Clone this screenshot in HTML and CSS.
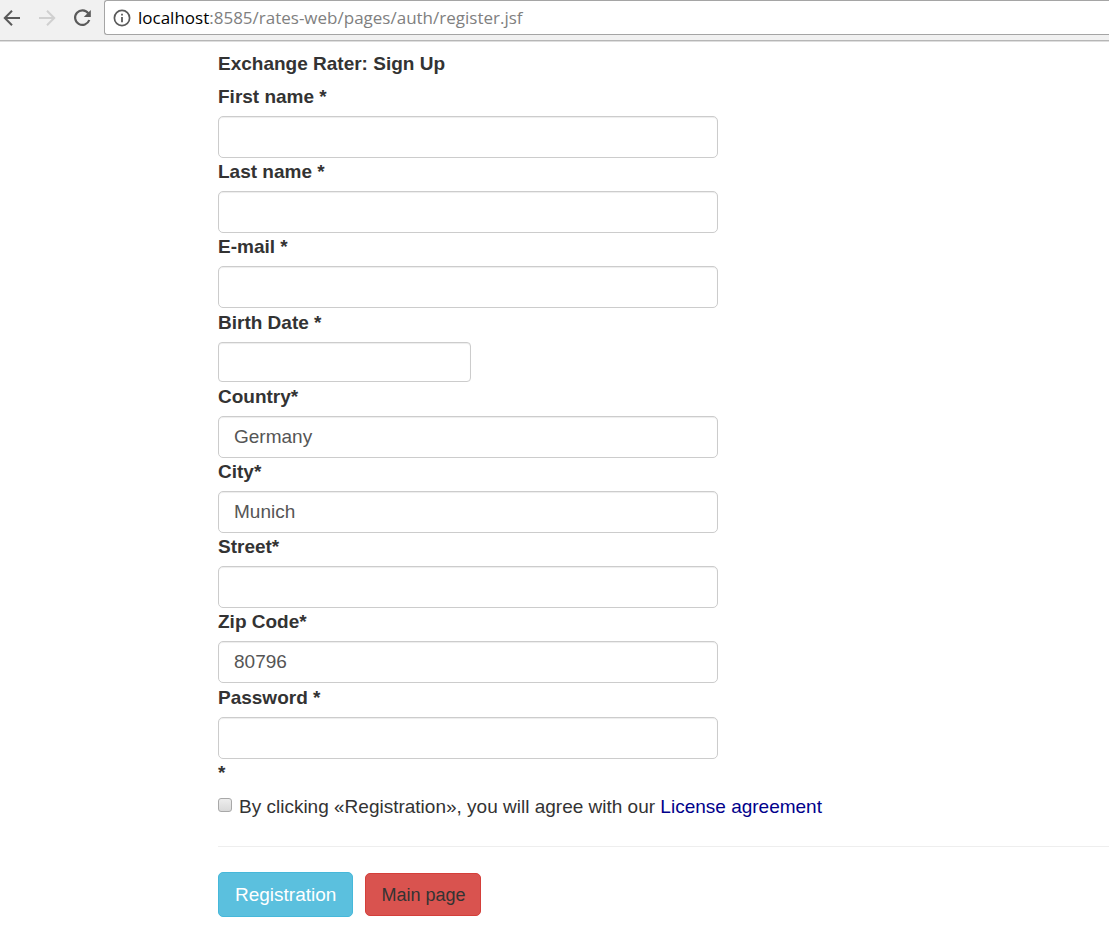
FILE: index.html
```
<!DOCTYPE html>
<html lang="en">
<head>
<meta charset="utf-8">
<title>Exchange Rater: Sign Up</title>
<link rel="stylesheet" href="styles.css">
</head>
<body>
<header class="toolbar">
  <nav class="nav">
    <button class="nav-btn" type="button" aria-label="Back">
      <svg width="20" height="20" viewBox="0 0 20 20" fill="none" stroke="#5a5a5a" stroke-width="2"><path d="M18 10H3M10 2.8 2.8 10l7.2 7.2"/></svg>
    </button>
    <button class="nav-btn" type="button" aria-label="Forward" disabled>
      <svg width="20" height="20" viewBox="0 0 20 20" fill="none" stroke="#d0d0d0" stroke-width="2"><path d="M2 10h15M10 2.8l7.2 7.2-7.2 7.2"/></svg>
    </button>
    <button class="nav-btn" type="button" aria-label="Reload">
      <svg width="20" height="20" viewBox="0 0 20 20"><path d="M16.3 5.3A7.3 7.3 0 1 0 17.3 12" fill="none" stroke="#5a5a5a" stroke-width="2.2"/><path d="M18.8 2v7h-7z" fill="#5a5a5a"/></svg>
    </button>
  </nav>
  <div class="address">
    <svg width="18" height="18" viewBox="0 0 18 18"><circle cx="9" cy="9" r="7.6" fill="none" stroke="#5a5a5a" stroke-width="1.7"/><path d="M8.1 4.8h1.8v1.8H8.1zM8.1 8h1.8v5.2H8.1z" fill="#5a5a5a"/></svg>
    <span class="url"><span class="url-host">localhost</span>:8585/rates-web/pages/auth/register.jsf</span>
  </div>
</header>
<main class="page">
  <h1 class="title">Exchange Rater: Sign Up</h1>
  <form class="form">
    <div class="group">
      <label class="label" for="first">First name *</label>
      <input class="input" id="first" type="text">
      <label class="label" for="last">Last name *</label>
      <input class="input" id="last" type="text">
      <label class="label" for="email">E-mail *</label>
      <input class="input" id="email" type="email">
    </div>
    <div class="group">
      <label class="label" for="birth">Birth Date *</label>
      <input class="input input-date" id="birth" type="text">
    </div>
    <div class="group">
      <label class="label" for="country">Country*</label>
      <input class="input" id="country" type="text" value="Germany">
      <label class="label" for="city">City*</label>
      <input class="input" id="city" type="text" value="Munich">
      <label class="label" for="street">Street*</label>
      <input class="input" id="street" type="text">
      <label class="label" for="zip">Zip Code*</label>
      <input class="input" id="zip" type="text" value="80796">
    </div>
    <div class="group">
      <label class="label" for="password">Password *</label>
      <input class="input" id="password" type="password">
      <span class="required">*</span>
    </div>
    <div class="agree">
      <input class="check" id="agree" type="checkbox">
      <label for="agree">By clicking «Registration», you will agree with our <a class="link" href="#">License agreement</a></label>
    </div>
    <hr class="rule">
    <div class="actions">
      <button class="btn btn-info" type="submit">Registration</button>
      <button class="btn btn-danger" type="button">Main page</button>
    </div>
  </form>
</main>
</body>
</html>
```
FILE: styles.css
```
* { box-sizing: border-box; }
body {
  margin: 0;
  background: #fff;
  color: #333;
  font: 19px/26px "Liberation Sans", Arial, sans-serif;
}
.toolbar {
  display: flex;
  align-items: flex-start;
  gap: 12px;
  padding-bottom: 5px;
  background: #f1f1f1;
  border-bottom: 1px solid #b6b6b6;
  box-shadow: 0 1px 0 #dedede;
}
.nav {
  display: flex;
  gap: 15px;
  padding-top: 8px;
  padding-left: 2px;
}
.nav-btn {
  display: flex;
  padding: 0;
  border: 0;
  background: none;
}
.address {
  flex: 1;
  display: flex;
  align-items: center;
  gap: 7px;
  height: 35px;
  padding-left: 8px;
  background: #fff;
  border: 1px solid #a5a5a5;
  border-right: 0;
  border-radius: 3px 0 0 3px;
}
.url {
  color: #808080;
  font: 17px/24px "Open Sans", "Noto Sans", sans-serif;
  white-space: nowrap;
}
.url-host { color: #000; }
.page { padding: 9px 0 32px 218px; }
.title {
  margin: 0;
  font-size: 19px;
  line-height: 27px;
}
.form {
  display: flex;
  flex-direction: column;
  gap: 1px;
  padding-top: 6px;
}
.group {
  display: flex;
  flex-direction: column;
  align-items: flex-start;
}
.label {
  height: 33px;
  line-height: 27px;
  font-weight: bold;
}
.input {
  width: 500px;
  max-width: 100%;
  height: 42px;
  padding: 0 15px;
  border: 1px solid #ccc;
  border-radius: 5px;
  background: #fff;
  box-shadow: inset 0 1px 1px rgba(0, 0, 0, .075);
  color: #555;
  font: inherit;
}
.input-date {
  width: 253px;
  height: 40px;
  border-radius: 4px;
}
.required {
  line-height: 27px;
  font-weight: bold;
}
.agree {
  display: flex;
  align-items: center;
  gap: 7px;
  padding-top: 7px;
}
.check {
  appearance: none;
  width: 14px;
  height: 14px;
  margin: 0 0 4px;
  border: 1px solid #a8a8a8;
  border-radius: 3px;
  background: linear-gradient(#ededed, #d9d9d9);
}
.link {
  color: #00008b;
  text-decoration: none;
}
.rule {
  width: 100%;
  margin: 25px 0 24px;
  border: 0;
  border-top: 1px solid #eee;
}
.actions {
  display: flex;
  align-items: center;
  gap: 12px;
}
.btn {
  padding: 8px 16px;
  border: 1px solid;
  border-radius: 5px;
  font: inherit;
}
.btn-info {
  height: 45px;
  background: #5bc0de;
  border-color: #46b8da;
  color: #fff;
}
.btn-danger {
  height: 43px;
  padding: 8px 15px;
  background: #d9534f;
  border-color: #d43f3a;
  color: #333;
  font-size: 18px;
}
```
